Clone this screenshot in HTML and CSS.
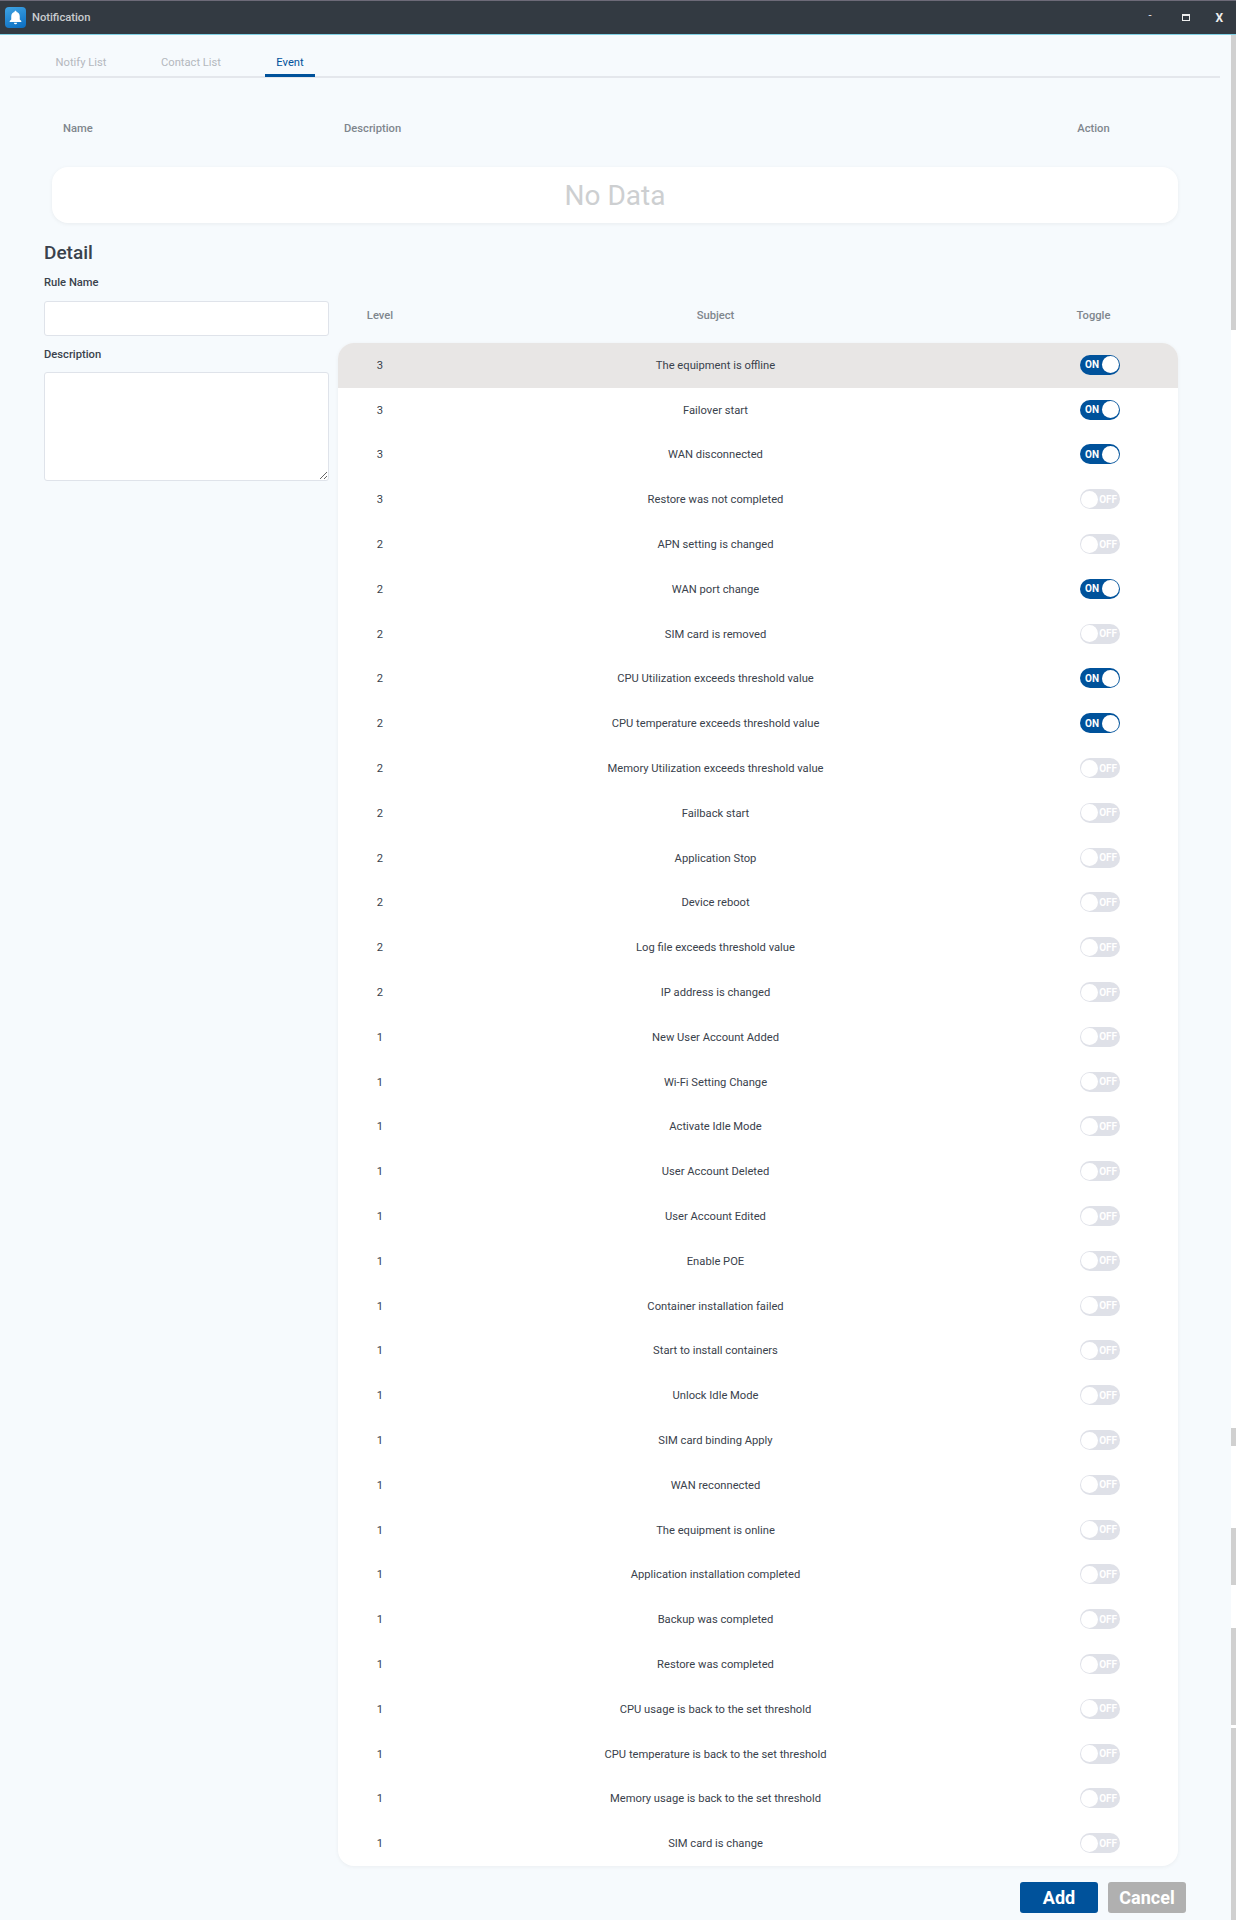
FILE: index.html
```html
<!DOCTYPE html>
<html lang="en">
	<head>
		<meta charset="UTF-8" />
		<title>Notification</title>
		<link rel="stylesheet" href="styles.css">
	</head>
	<body>
		<div class="titlebar">
			<div class="app-icon">
				<svg viewBox="0 0 24 24" width="17" height="17">
					<path fill="#fff" d="M12 2.5c-.8 0-1.4.6-1.4 1.4v.5C7.7 5.100 6 7.600 6 10.500v4.300L3.800 17v1.500h16.400V17L18 14.800v-4.300c0-2.900-1.700-5.400-4.600-6.100v-.5c0-.8-.6-1.400-1.400-1.400z" />
					<path fill="#fff" d="M9.800 19.500a2.200 2.200 0 0 0 4.400 0z" />
				</svg>
			</div>
			<span class="app-title">Notification</span>
			<div class="win-buttons">
				<span class="win-min">-</span>
				<span class="win-max"></span>
				<span class="win-close">X</span>
			</div>
		</div>

		<div class="window">
			<div class="content">
				<div class="tabs">
					<a class="tab">Notify List</a>
					<a class="tab">Contact List</a>
					<a class="tab active">Event</a>
				</div>

				<div class="list-head">
					<span>Name</span>
					<span>Description</span>
					<span class="center">Action</span>
				</div>
				<div class="no-data">No Data</div>

				<div class="detail">
					<div class="detail-form">
						<h2>Detail</h2>
						<label>Rule Name</label>
						<input type="text" />
						<label>Description</label>
						<textarea></textarea>
					</div>

					<div class="detail-events">
						<div class="event-head">
							<span>Level</span>
							<span>Subject</span>
							<span>Toggle</span>
						</div>
						<div class="event-list">
							<div class="event-row selected"><span>3</span><span>The equipment is offline</span><span class="toggle on"><b>ON</b><i></i></span></div>
							<div class="event-row"><span>3</span><span>Failover start</span><span class="toggle on"><b>ON</b><i></i></span></div>
							<div class="event-row"><span>3</span><span>WAN disconnected</span><span class="toggle on"><b>ON</b><i></i></span></div>
							<div class="event-row"><span>3</span><span>Restore was not completed</span><span class="toggle"><i></i><b>OFF</b></span></div>
							<div class="event-row"><span>2</span><span>APN setting is changed</span><span class="toggle"><i></i><b>OFF</b></span></div>
							<div class="event-row"><span>2</span><span>WAN port change</span><span class="toggle on"><b>ON</b><i></i></span></div>
							<div class="event-row"><span>2</span><span>SIM card is removed</span><span class="toggle"><i></i><b>OFF</b></span></div>
							<div class="event-row"><span>2</span><span>CPU Utilization exceeds threshold value</span><span class="toggle on"><b>ON</b><i></i></span></div>
							<div class="event-row"><span>2</span><span>CPU temperature exceeds threshold value</span><span class="toggle on"><b>ON</b><i></i></span></div>
							<div class="event-row"><span>2</span><span>Memory Utilization exceeds threshold value</span><span class="toggle"><i></i><b>OFF</b></span></div>
							<div class="event-row"><span>2</span><span>Failback start</span><span class="toggle"><i></i><b>OFF</b></span></div>
							<div class="event-row"><span>2</span><span>Application Stop</span><span class="toggle"><i></i><b>OFF</b></span></div>
							<div class="event-row"><span>2</span><span>Device reboot</span><span class="toggle"><i></i><b>OFF</b></span></div>
							<div class="event-row"><span>2</span><span>Log file exceeds threshold value</span><span class="toggle"><i></i><b>OFF</b></span></div>
							<div class="event-row"><span>2</span><span>IP address is changed</span><span class="toggle"><i></i><b>OFF</b></span></div>
							<div class="event-row"><span>1</span><span>New User Account Added</span><span class="toggle"><i></i><b>OFF</b></span></div>
							<div class="event-row"><span>1</span><span>Wi-Fi Setting Change</span><span class="toggle"><i></i><b>OFF</b></span></div>
							<div class="event-row"><span>1</span><span>Activate Idle Mode</span><span class="toggle"><i></i><b>OFF</b></span></div>
							<div class="event-row"><span>1</span><span>User Account Deleted</span><span class="toggle"><i></i><b>OFF</b></span></div>
							<div class="event-row"><span>1</span><span>User Account Edited</span><span class="toggle"><i></i><b>OFF</b></span></div>
							<div class="event-row"><span>1</span><span>Enable POE</span><span class="toggle"><i></i><b>OFF</b></span></div>
							<div class="event-row"><span>1</span><span>Container installation failed</span><span class="toggle"><i></i><b>OFF</b></span></div>
							<div class="event-row"><span>1</span><span>Start to install containers</span><span class="toggle"><i></i><b>OFF</b></span></div>
							<div class="event-row"><span>1</span><span>Unlock Idle Mode</span><span class="toggle"><i></i><b>OFF</b></span></div>
							<div class="event-row"><span>1</span><span>SIM card binding Apply</span><span class="toggle"><i></i><b>OFF</b></span></div>
							<div class="event-row"><span>1</span><span>WAN reconnected</span><span class="toggle"><i></i><b>OFF</b></span></div>
							<div class="event-row"><span>1</span><span>The equipment is online</span><span class="toggle"><i></i><b>OFF</b></span></div>
							<div class="event-row"><span>1</span><span>Application installation completed</span><span class="toggle"><i></i><b>OFF</b></span></div>
							<div class="event-row"><span>1</span><span>Backup was completed</span><span class="toggle"><i></i><b>OFF</b></span></div>
							<div class="event-row"><span>1</span><span>Restore was completed</span><span class="toggle"><i></i><b>OFF</b></span></div>
							<div class="event-row"><span>1</span><span>CPU usage is back to the set threshold</span><span class="toggle"><i></i><b>OFF</b></span></div>
							<div class="event-row"><span>1</span><span>CPU temperature is back to the set threshold</span><span class="toggle"><i></i><b>OFF</b></span></div>
							<div class="event-row"><span>1</span><span>Memory usage is back to the set threshold</span><span class="toggle"><i></i><b>OFF</b></span></div>
							<div class="event-row"><span>1</span><span>SIM card is change</span><span class="toggle"><i></i><b>OFF</b></span></div>
						</div>
					</div>
				</div>

				<div class="footer">
					<button class="btn-add">Add</button>
					<button class="btn-cancel">Cancel</button>
				</div>
			</div>
			<div class="rail"></div>
		</div>
	</body>
</html>
```

FILE: styles.css
```css
body {
	font-family: Roboto, "Liberation Sans", sans-serif;
	font-size: 11.2px;
	color: #3a424c;
	background-color: #fff;
	margin: 0;
	height: 1920px;
	overflow: hidden;
}

/* Title bar */
.titlebar {
	display: flex;
	align-items: center;
	height: 33px;
	padding-left: 5px;
	background-color: #333a42;
	border-top: 1px solid #6d6a78;
	border-bottom: 1px solid #7fd0e4;
}
.app-icon {
	display: flex;
	align-items: center;
	justify-content: center;
	width: 21px;
	height: 21px;
	border-radius: 4px;
	background: linear-gradient(160deg, #3fa4e4, #0a6cc0);
}
.app-title {
	margin-left: 6px;
	color: #c9cccf;
	font-weight: 500;
}
.win-buttons {
	display: flex;
	align-items: center;
	margin-left: auto;
	color: #eee;
}
.win-min {
	width: 8px;
	font-size: 11px;
	margin-top: -5px;
}
.win-max {
	width: 6px;
	height: 4px;
	margin-left: 26px;
	border: 1px solid #eee;
	border-top-width: 2px;
}
.win-close {
	margin-left: 25px;
	margin-right: 13px;
	font-size: 12px;
	font-weight: 700;
}

/* Main area */
.window {
	display: flex;
	height: 1885px;
}
.content {
	flex: 1;
	background-color: #f6fafd;
}
.rail {
	width: 5px;
	background: linear-gradient(
		to bottom,
		#d0d0d0 0 295px,
		#fff 295px 1393px,
		#d0d0d0 1393px 1411px,
		#fff 1411px 1493px,
		#d0d0d0 1493px 1550px,
		#fff 1550px 1593px,
		#d0d0d0 1593px 1690px,
		#fff 1690px 1693px,
		#d0d0d0 1693px
	);
}

/* Tabs */
.tabs {
	display: flex;
	gap: 40px;
	height: 41px;
	margin: 0 11px 0 10px;
	padding-left: 36px;
	border-bottom: 2px solid #e4e7ec;
}
.tab {
	width: 70px;
	height: 42px;
	line-height: 56px;
	text-align: center;
	color: #b4b8bd;
	box-sizing: border-box;
}
.tab.active {
	width: 50px;
	margin-left: -1px;
	color: #00529b;
	border-bottom: 3px solid #00529b;
}

/* Top list */
.list-head {
	display: grid;
	grid-template-columns: 281px 1fr 169px;
	align-items: center;
	height: 40px;
	margin: 30px 53px 19px 52px;
	padding-left: 11px;
	color: #7f868d;
	font-weight: 500;
}
.center {
	text-align: center;
}
.no-data {
	height: 56px;
	margin: 0 53px 0 52px;
	line-height: 58px;
	text-align: center;
	font-size: 28px;
	color: #cdcfd1;
	background-color: #fff;
	border-radius: 16px;
	box-shadow: 0 1px 4px rgba(0, 0, 0, 0.06);
}

/* Detail */
.detail {
	display: flex;
	gap: 9px;
	margin: 17px 53px 0 44px;
}
.detail-form {
	display: flex;
	flex-direction: column;
	width: 285px;
}
.detail-form h2 {
	margin: 0;
	font-size: 19px;
	line-height: 26px;
	height: 24px;
	font-weight: 500;
}
.detail-form label {
	margin-top: 10px;
	height: 16px;
	line-height: 18px;
	font-weight: 500;
}
.detail-form input,
.detail-form textarea {
	box-sizing: border-box;
	width: 285px;
	margin: 10px 0 0;
	border: 1px solid #dfe3ea;
	border-radius: 3px;
	background-color: #fff;
	outline: none;
}
.detail-form input {
	height: 35px;
	margin-top: 11px;
}
.detail-form textarea {
	height: 109px;
}
.detail-events {
	flex: 1;
}
.event-head,
.event-row {
	display: grid;
	grid-template-columns: 84px 1fr 169px;
	align-items: center;
	text-align: center;
}
.event-head {
	height: 28px;
	margin: 61px 0 14px;
	color: #7f868d;
	font-weight: 500;
}
.event-list {
	background-color: #fff;
	border-radius: 16px;
	overflow: hidden;
	box-shadow: 0 1px 4px rgba(0, 0, 0, 0.05);
}
.event-row {
	height: 44.8px;
}
.event-row.selected {
	background-color: #e8e6e5;
}

/* Toggle */
.toggle {
	display: flex;
	align-items: center;
	justify-content: space-between;
	box-sizing: border-box;
	width: 40px;
	height: 20px;
	margin: -1px 0 0 71px;
	padding: 0 1px;
	border-radius: 10px;
	background-color: #dfe1e8;
	color: #fff;
	font-size: 10px;
}
.toggle b {
	font-weight: 700;
	margin-right: 2px;
}
.toggle i {
	box-sizing: border-box;
	width: 17px;
	height: 17px;
	border-radius: 50%;
	background-color: #fff;
}
.toggle.on {
	background-color: #00529b;
}
.toggle.on b {
	margin-right: 0;
	margin-left: 4px;
}

/* Footer buttons */
.footer {
	display: flex;
	justify-content: flex-end;
	gap: 10px;
	margin: 16px 45px 0 0;
}
button {
	width: 78px;
	height: 31px;
	padding: 0;
	border: none;
	border-radius: 3px;
	color: #fff;
	font-family: Roboto, sans-serif;
	font-size: 18px;
	font-weight: 700;
}
.btn-add {
	background-color: #00529b;
}
.btn-cancel {
	background-color: #b0b0b0;
}
```
